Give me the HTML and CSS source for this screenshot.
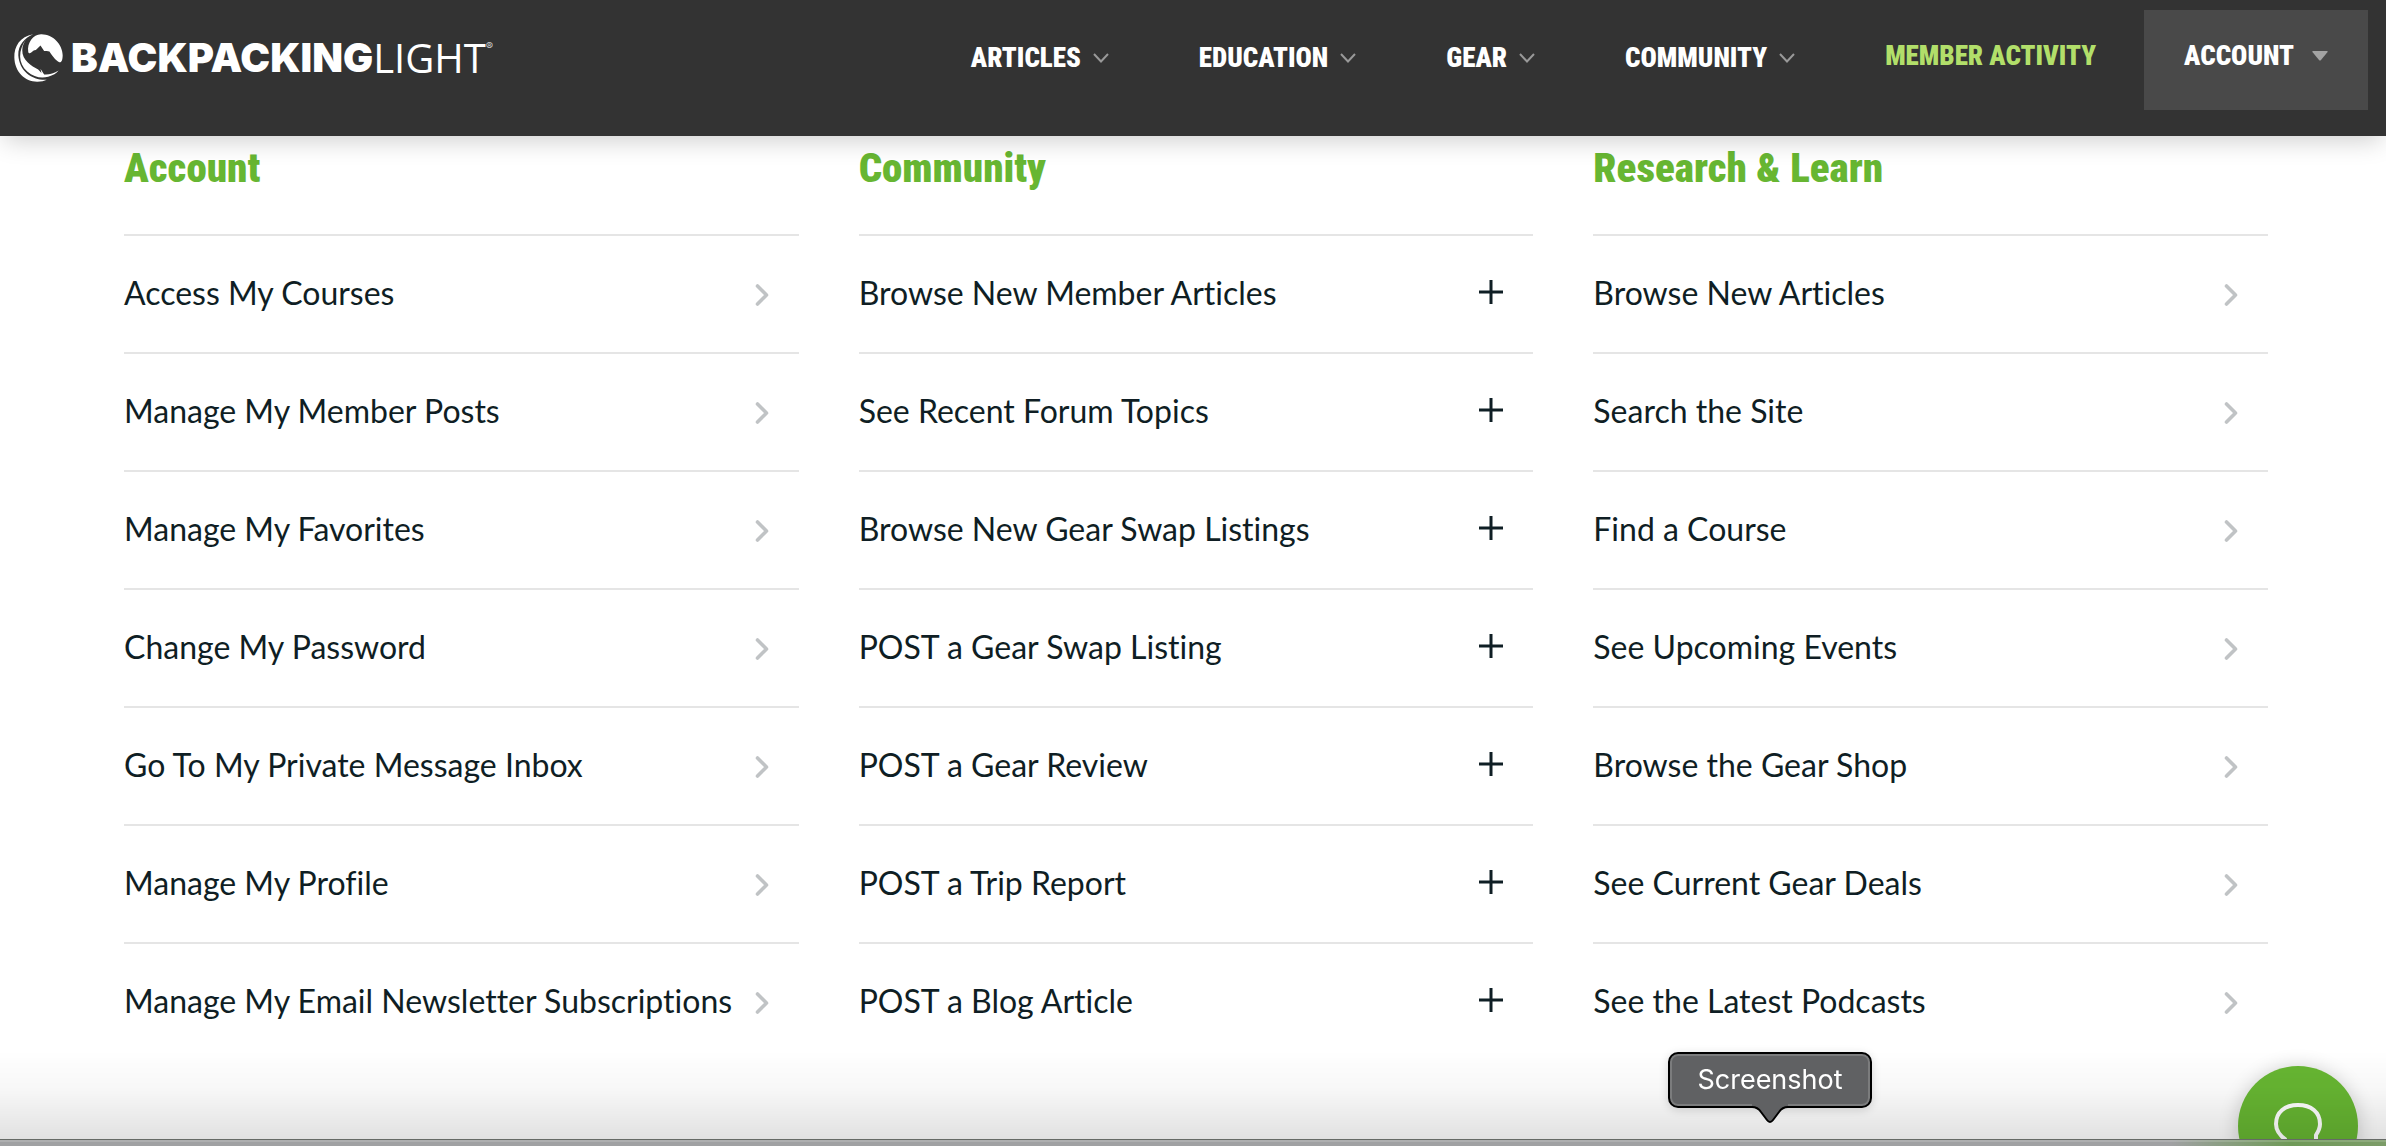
FILE: index.html
```html
<!DOCTYPE html>
<html lang="en">
<head>
<meta charset="utf-8">
<meta name="viewport" content="width=device-width, initial-scale=1">
<title>Member Activity – Backpacking Light</title>
<link rel="stylesheet" href="styles.css">
</head>
<body>
<svg class="sprite" aria-hidden="true">
  <symbol id="i-down" viewBox="0 0 16 10"><path d="M1 1l7 7.500l7-7.500" fill="none" stroke="currentColor" stroke-width="2"/></symbol>
  <symbol id="i-right" viewBox="0 0 14 22"><path d="M2.500 2l9 9l-9 9" fill="none" stroke="currentColor" stroke-width="3.600" stroke-linecap="round" stroke-linejoin="round"/></symbol>
  <symbol id="i-plus" viewBox="0 0 24 24"><path d="M12 0v24M0 12h24" fill="none" stroke="currentColor" stroke-width="3"/></symbol>
</svg>

<header class="site-header">
  <a class="logo" href="#" aria-label="Backpacking Light">
    <svg class="logo-mark" viewBox="42 101 148 145" aria-hidden="true">
      <path d="M100 102C60 108 42 140 43 172C44 215 75 245 112 245C125 245 133 243 141 239C100 242 58 215 55 165C54 135 75 112 100 102Z"/>
      <path d="M79 116C54 150 54 190 82 214C102 232 125 235 145 230C160 226 170 219 177 211C162 220 145 225 133 223L122 206L125 219L115 208C95 198 66 180 67 150C67 138 72 127 79 116Z"/>
      <path d="M85 155C81 128 100 101 125 102C160 103 188 132 189 165C189 180 185 188 179 186C168 182 160 170 149 154L141 152L133 152L122 136L108 149C102 149 98 153 94 157C90 160 86 160 85 155Z"/>
    </svg>
    <span class="logo-bold">BACKPACKING</span><span class="logo-thin">LIGHT</span><span class="logo-reg">®</span>
  </a>
  <nav class="menu" aria-label="Main">
    <button class="menu-item" type="button">ARTICLES <svg class="down"><use href="#i-down"/></svg></button>
    <button class="menu-item" type="button">EDUCATION <svg class="down"><use href="#i-down"/></svg></button>
    <button class="menu-item" type="button">GEAR <svg class="down"><use href="#i-down"/></svg></button>
    <button class="menu-item" type="button">COMMUNITY <svg class="down"><use href="#i-down"/></svg></button>
    <a class="menu-item active" href="#">MEMBER ACTIVITY</a>
  </nav>
  <button class="menu-item account" type="button">ACCOUNT <svg class="caret" viewBox="0 0 16 10"><path d="M1 0h14q1 0 .6 1L9 9q-1 1-2 0L.4 1Q0 0 1 0Z"/></svg></button>
</header>

<main class="columns">
  <section>
    <h2>Account</h2>
    <ul>
      <li><a href="#">Access My Courses <svg class="right"><use href="#i-right"/></svg></a></li>
      <li><a href="#">Manage My Member Posts <svg class="right"><use href="#i-right"/></svg></a></li>
      <li><a href="#">Manage My Favorites <svg class="right"><use href="#i-right"/></svg></a></li>
      <li><a href="#">Change My Password <svg class="right"><use href="#i-right"/></svg></a></li>
      <li><a href="#">Go To My Private Message Inbox <svg class="right"><use href="#i-right"/></svg></a></li>
      <li><a href="#">Manage My Profile <svg class="right"><use href="#i-right"/></svg></a></li>
      <li><a href="#">Manage My Email Newsletter Subscriptions <svg class="right"><use href="#i-right"/></svg></a></li>
    </ul>
  </section>
  <section>
    <h2>Community</h2>
    <ul>
      <li><a href="#">Browse New Member Articles <svg class="plus"><use href="#i-plus"/></svg></a></li>
      <li><a href="#">See Recent Forum Topics <svg class="plus"><use href="#i-plus"/></svg></a></li>
      <li><a href="#">Browse New Gear Swap Listings <svg class="plus"><use href="#i-plus"/></svg></a></li>
      <li><a href="#">POST a Gear Swap Listing <svg class="plus"><use href="#i-plus"/></svg></a></li>
      <li><a href="#">POST a Gear Review <svg class="plus"><use href="#i-plus"/></svg></a></li>
      <li><a href="#">POST a Trip Report <svg class="plus"><use href="#i-plus"/></svg></a></li>
      <li><a href="#">POST a Blog Article <svg class="plus"><use href="#i-plus"/></svg></a></li>
    </ul>
  </section>
  <section>
    <h2>Research &amp; Learn</h2>
    <ul>
      <li><a href="#">Browse New Articles <svg class="right"><use href="#i-right"/></svg></a></li>
      <li><a href="#">Search the Site <svg class="right"><use href="#i-right"/></svg></a></li>
      <li><a href="#">Find a Course <svg class="right"><use href="#i-right"/></svg></a></li>
      <li><a href="#">See Upcoming Events <svg class="right"><use href="#i-right"/></svg></a></li>
      <li><a href="#">Browse the Gear Shop <svg class="right"><use href="#i-right"/></svg></a></li>
      <li><a href="#">See Current Gear Deals <svg class="right"><use href="#i-right"/></svg></a></li>
      <li><a href="#">See the Latest Podcasts <svg class="right"><use href="#i-right"/></svg></a></li>
    </ul>
  </section>
</main>

<button class="chat" type="button" aria-label="Open chat">
  <svg viewBox="0 0 48 48" aria-hidden="true"><path d="M12 37C5 32 2 27 2 21C2 9 11 2 24 2S46 9 46 21C46 26 44 29 42 32V43C36 42 32 41 29 39" fill="none" stroke="#fff" stroke-width="4" stroke-linejoin="round"/></svg>
</button>
<div class="shade"></div>
<div class="dock-edge"></div>
<div class="tooltip" role="tooltip">Screenshot
  <svg class="tip" viewBox="0 0 36 20" aria-hidden="true"><path class="tip-fill" d="M0 0V3C5 3 7 5 9 8L15 16Q18 20 21 16L27 8C29 5 31 3 36 3V0Z"/><path class="tip-line" d="M0 3C5 3 7 5 9 8L15 16Q18 20 21 16L27 8C29 5 31 3 36 3"/></svg>
</div>
</body>
</html>
```
FILE: styles.css
```css
* { box-sizing: border-box; }

body {
  margin: 0;
  min-height: 100vh;
  background: #fff;
  color: #0f1e24;
  font-family: Lato, "Open Sans", sans-serif;
  font-size: 32px;
  font-variant-ligatures: none;
}

a { color: inherit; text-decoration: none; }

button {
  border: 0;
  padding: 0;
  background: none;
  font: inherit;
  color: inherit;
  cursor: pointer;
}

.sprite { display: none; }

/* Header */
.site-header {
  position: sticky;
  top: 0;
  z-index: 1;
  display: flex;
  align-items: flex-start;
  height: 136px;
  padding: 10px 18px 0 14px;
  background: #333;
  color: #fff;
  box-shadow: 0 8px 24px -4px rgba(0, 0, 0, .2);
}

.logo {
  display: flex;
  align-items: center;
  height: 96px;
}

.logo-mark { width: 49px; height: 48px; margin-right: 8px; fill: #fff; }
.logo-bold { font: 900 40px/48px Inter, sans-serif; }
.logo-thin { font: 400 40px/48px "Open Sans", sans-serif; }
.logo-reg { align-self: flex-start; padding-top: 30px; font: 400 11px/12px Inter, sans-serif; color: #ccc; }

.menu {
  display: flex;
  align-items: center;
  gap: 90px;
  height: 92px;
  margin-left: auto;
  margin-right: 48px;
}

.menu-item {
  display: flex;
  align-items: center;
  gap: 12px;
  font: 900 27px/32px "Roboto Condensed", Roboto, sans-serif;
  white-space: nowrap;
}

.menu button { padding-top: 4px; }
.menu-item.active { color: #b2df6a; }
.down { width: 16px; height: 10px; color: #999; }
.caret { width: 16px; height: 10px; fill: #a3a3a3; }
.account { gap: 18px; height: 100px; padding: 0 40px 8px; background: #494949; }

/* Link lists */
.columns {
  display: grid;
  grid-template-columns: repeat(3, 1fr);
  gap: 60px;
  padding: 8px 118px 80px 124px;
}

h2 {
  margin: 0;
  padding-bottom: 42px;
  font: 900 41px/48px "Roboto Condensed", Roboto, sans-serif;
  color: #67b632;
}

ul { margin: 0; padding: 0; list-style: none; }
li { border-top: 2px solid #e5e5e5; }

li a {
  display: flex;
  align-items: center;
  justify-content: space-between;
  padding: 37px 30px 39px 0;
  line-height: 40px;
  white-space: nowrap;
}

.right { width: 14px; height: 22px; margin-top: 4px; color: #c0c3c5; }
.plus { width: 24px; height: 24px; margin-bottom: 2px; }

/* Floating items at the foot of the window */
.chat {
  position: fixed;
  right: 28px;
  bottom: -40px;
  width: 120px;
  height: 120px;
  border-radius: 50%;
  background: #67b632;
  box-shadow: 0 2px 20px rgba(0, 0, 0, .2);
}

.chat svg { display: block; width: 48px; height: 48px; margin: 2px auto 0; }

.shade {
  position: fixed;
  inset: auto 0 0;
  height: 96px;
  background: linear-gradient(rgba(0, 0, 0, 0), rgba(0, 0, 0, .03) 42%, rgba(0, 0, 0, .13));
  pointer-events: none;
}

.dock-edge {
  position: fixed;
  inset: auto 0 0;
  height: 7px;
  border-top: 1px solid #666a66;
  background: linear-gradient(90deg, #a0a1a3 91%, #6f9a58 96%, #7c9c68);
  box-shadow: inset 0 2px rgba(255, 255, 255, .15);
}

.tooltip {
  position: fixed;
  right: 514px;
  bottom: 38px;
  width: 204px;
  height: 56px;
  border: 2px solid #000;
  border-radius: 10px;
  background: #606163;
  box-shadow: inset 0 0 0 2px #7b7c7d, 0 2px 10px rgba(0, 0, 0, .15);
  color: #fff;
  font: 400 27px/52px Inter, sans-serif;
  text-align: center;
}

.tip { position: absolute; top: 50px; left: 82px; width: 36px; height: 20px; }
.tip-fill { fill: #606163; }
.tip-line { fill: none; stroke: #000; stroke-width: 2; }
```
